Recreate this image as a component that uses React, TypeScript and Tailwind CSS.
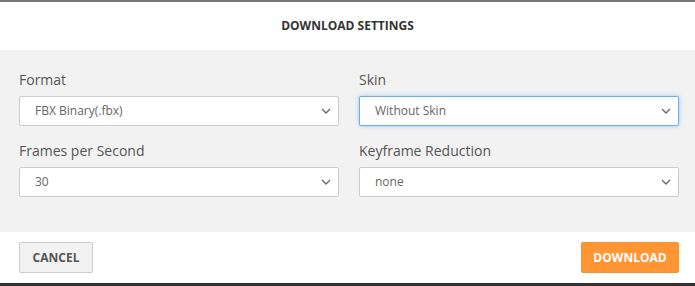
import React from "react";

function Chevron() {
  return (
    <svg width="10" height="6" viewBox="0 0 10 6" className="shrink-0">
      <path d="M1 1 L5 5 L9 1" fill="none" stroke="#666" strokeWidth="1.3" />
    </svg>
  );
}

function Field({ label, value, focused, last }: { label: string; value: string; focused?: boolean; last?: boolean }) {
  return (
    <div className={"flex flex-col " + (last ? "" : "mb-[15px]")}>
      <div className="h-[20px] leading-[20px] text-[14px] text-[#555] mb-[6px]">{label}</div>
      <div
        className={
          "h-[30px] bg-white flex items-center justify-between pl-[15px] pr-[7px] rounded-[2px] border " +
          (focused ? "border-[#66afe9] shadow-[0_0_4px_rgba(102,175,233,0.6)]" : "border-[#ccc]")
        }
      >
        <span className="text-[12px] text-[#666]">{value}</span>
        <Chevron />
      </div>
    </div>
  );
}

export default function App() {
  return (
    <div className="w-[695px] h-[286px] flex flex-col bg-white overflow-hidden" style={{ fontFamily: '"Open Sans", sans-serif' }}>
      <div className="h-[2px] bg-[#777] shrink-0" />
      <div className="h-[48px] flex items-center justify-center text-[12px] font-bold text-[#333] shrink-0">DOWNLOAD SETTINGS</div>
      <div className="h-[182px] bg-[#f2f2f2] pl-[19px] pt-[20px] grid grid-cols-[320px_320px] gap-x-[20px] shrink-0">
        <div className="flex flex-col">
          <Field label="Format" value="FBX Binary(.fbx)" />
          <Field label="Frames per Second" value="30" last />
        </div>
        <div className="flex flex-col">
          <Field label="Skin" value="Without Skin" focused />
          <Field label="Keyframe Reduction" value="none" last />
        </div>
      </div>
      <div className="h-[51px] flex items-start justify-between pl-[19px] pr-[16px] pt-[10px] shrink-0">
        <button className="w-[74px] h-[31px] bg-[#f2f2f2] border border-[#ccc] rounded-[2px] text-[12px] font-bold text-[#555]">CANCEL</button>
        <button className="w-[98px] h-[31px] bg-[#ff9533] border border-[#f79130] rounded-[2px] text-[12px] font-bold text-white">DOWNLOAD</button>
      </div>
      <div className="h-[3px] bg-[#333] shrink-0" />
    </div>
  );
}
